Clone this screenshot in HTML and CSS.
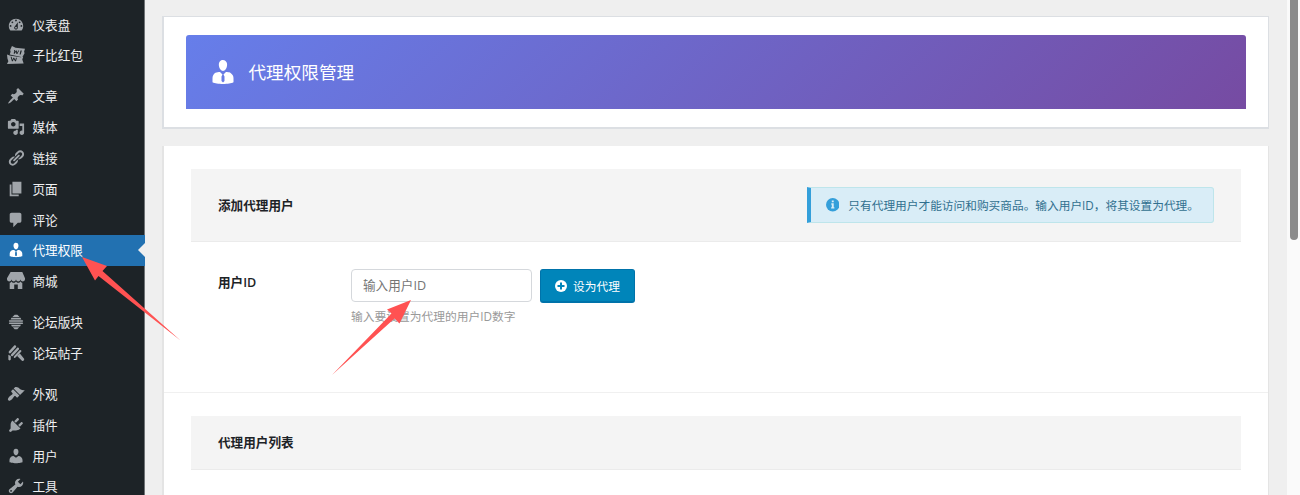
FILE: index.html
```html
<!DOCTYPE html>
<html lang="zh-CN">
<head>
    <meta charset="UTF-8">
    <title>代理权限管理</title>
    <meta name="viewport" content="width=device-width, initial-scale=1.0">
    <link rel="stylesheet" href="styles.css">
</head>
<body>

    <div class="admin">
        <ul class="menu">
            <li class="menu-item">
                <svg class="icon" viewBox="0 0 20 20"><path d="M3.76 16h12.48c1.1-1.37 1.76-3.11 1.76-5 0-4.42-3.58-8-8-8s-8 3.58-8 8c0 1.89.66 3.63 1.76 5zM10 4c.55 0 1 .45 1 1s-.45 1-1 1-1-.45-1-1 .45-1 1-1zM6 6c.55 0 1 .45 1 1s-.45 1-1 1-1-.45-1-1 .45-1 1-1zm8 0c.55 0 1 .45 1 1s-.45 1-1 1-1-.45-1-1 .45-1 1-1zm-5.37 5.55L12 7v6c0 1.1-.9 2-2 2s-2-.9-2-2c0-.57.24-1.08.63-1.45zM4 10c.55 0 1 .45 1 1s-.45 1-1 1-1-.45-1-1 .45-1 1-1zm12 0c.55 0 1 .45 1 1s-.45 1-1 1-1-.45-1-1 .45-1 1-1zm-5 3c0-.55-.45-1-1-1s-1 .45-1 1 .45 1 1 1 1-.45 1-1z"/></svg>
                <span>仪表盘</span>
            </li>
            <li class="menu-item">
                <svg class="icon" viewBox="0 0 20 20"><path fill-rule="evenodd" d="M5.5 0l4 2 10.5 1-1 3 .5 2-2.500 4.500L3 9.500l1-3-.5-2zM8 4.500l-.5 4h1l1.500-2 .5 2.500h1l2-4h-1l-1.200 2.500-.5-2.500h-1L8.500 7 9 4.500zM15 5l-1 4.500h1.200L16.500 5z"/><path fill-rule="evenodd" d="M0 9.500l3 1 12 2 3-.500-1 3 1.500 4.500L0 20l1.500-3-1-3zM4 12l1.500 5h1l1-2.500 1.500 2.500h1l1-4h-1l-.7 2.500L8 13H7l-.7 2.500L5 12z"/></svg>
                <span>子比红包</span>
            </li>
            <li class="separator"></li>
            <li class="menu-item">
                <svg class="icon" viewBox="0 0 20 20"><path d="M10.44 3.02l1.82-1.82 6.36 6.35-1.83 1.82c-1.05-.68-2.48-.57-3.41.36l-.75.75c-.92.93-1.04 2.35-.35 3.41l-1.83 1.82-2.41-2.41-2.8 2.79c-.42.42-3.38 2.71-3.8 2.29s1.86-3.39 2.28-3.81l2.79-2.79L4.1 9.36l1.83-1.82c1.05.69 2.48.57 3.4-.36l.75-.75c.93-.92 1.05-2.35.36-3.41z"/></svg>
                <span>文章</span>
            </li>
            <li class="menu-item">
                <svg class="icon" viewBox="0 0 20 20"><path d="M13 11V4c0-.55-.45-1-1-1h-1.67L9 1H5L3.67 3H2c-.55 0-1 .45-1 1v7c0 .55.45 1 1 1h10c.55 0 1-.45 1-1zM7 4.5c1.38 0 2.5 1.12 2.5 2.5S8.38 9.5 7 9.5 4.5 8.38 4.5 7 5.62 4.5 7 4.5zM14 6h5v10.5c0 1.38-1.12 2.5-2.5 2.5S14 17.88 14 16.5s1.12-2.5 2.5-2.5c.17 0 .34.02.5.05V9h-3V6zm-4 8.05V13h2v3.5c0 1.38-1.12 2.5-2.5 2.5S7 17.88 7 16.5 8.12 14 9.5 14c.17 0 .34.02.5.05z"/></svg>
                <span>媒体</span>
            </li>
            <li class="menu-item">
                <svg class="icon" viewBox="0 0 20 20"><path d="M17.74 2.76c1.68 1.69 1.68 4.41 0 6.1l-1.53 1.52c-1.12 1.12-2.7 1.47-4.14 1.09l2.62-2.61.76-.77.76-.76c.84-.84.84-2.2 0-3.04-.84-.85-2.2-.85-3.04 0l-.77.76-3.38 3.38c-.37-1.44-.02-3.02 1.1-4.14l1.52-1.53c1.69-1.68 4.42-1.68 6.1 0zM8.59 13.43l5.34-5.34c.42-.42.42-1.1 0-1.52-.44-.43-1.13-.39-1.53 0l-5.33 5.34c-.42.42-.42 1.1 0 1.52.44.43 1.13.39 1.52 0zm-.76 2.29l4.14-4.15c.38 1.44.03 3.02-1.09 4.14l-1.52 1.53c-1.69 1.68-4.41 1.68-6.1 0-1.68-1.68-1.68-4.42 0-6.1l1.53-1.52c1.12-1.12 2.7-1.47 4.14-1.1l-4.14 4.15c-.85.84-.85 2.2 0 3.05.84.84 2.2.84 3.04 0z"/></svg>
                <span>链接</span>
            </li>
            <li class="menu-item">
                <svg class="icon" viewBox="0 0 20 20"><path d="M6 15V2h10v13H6zm-1 1h8v2H3V5h2v11z"/></svg>
                <span>页面</span>
            </li>
            <li class="menu-item">
                <svg class="icon" viewBox="0 0 20 20"><path d="M5 2h9c1.1 0 2 .9 2 2v7c0 1.1-.9 2-2 2h-2l-5 5v-5H5c-1.1 0-2-.9-2-2V4c0-1.1.9-2 2-2z"/></svg>
                <span>评论</span>
            </li>
            <li class="menu-item current">
                <svg class="icon" viewBox="0 0 20 20"><path id="businessman" d="M7.3 6l-.03-.19c-.04-.37-.05-.73-.03-1.08.02-.36.1-.71.25-1.04.14-.32.31-.61.52-.86s.49-.46.83-.6c.34-.15.72-.23 1.13-.23.69 0 1.26.2 1.71.59s.76.87.91 1.44.18 1.16.09 1.78l-.03.19c-.01.09-.05.25-.11.48-.05.24-.12.47-.2.69-.08.21-.19.45-.34.72-.14.27-.3.49-.47.69-.18.19-.4.34-.67.48-.27.13-.55.19-.86.19s-.59-.06-.87-.19c-.26-.13-.49-.29-.67-.5-.18-.2-.34-.42-.49-.66-.15-.25-.26-.49-.34-.73-.09-.25-.16-.47-.21-.67-.06-.21-.1-.37-.12-.5zm9.2 6.24c.41.7.5 1.41.5 2.14v2.49c0 .03-.12.08-.29.13-.18.04-.42.13-.97.27-.55.12-1.1.24-1.65.34s-1.19.19-1.95.27c-.75.08-1.46.12-2.13.12-.68 0-1.39-.04-2.14-.12-.75-.07-1.4-.17-1.98-.27-.58-.11-1.08-.23-1.56-.34-.49-.11-.8-.21-1.06-.29L3 16.87v-2.49c0-.75.07-1.46.46-2.15s.81-1.25 1.5-1.68C5.66 10.12 7.19 10 8 10l1.67 1.67L9 13v3l1.02 1.08L11 16v-3l-.68-1.33L11.97 10c.77 0 2.2.07 2.9.52.71.45 1.21 1.02 1.63 1.72z"/></svg>
                <span>代理权限</span>
            </li>
            <li class="menu-item">
                <svg class="icon" viewBox="0 0 20 20"><path d="M1 10c.41.29.96.43 1.5.43.55 0 1.09-.14 1.5-.43.62-.46 1-1.17 1-2 0 .83.37 1.54 1 2 .41.29.96.43 1.5.43.55 0 1.09-.14 1.5-.43.62-.46 1-1.17 1-2 0 .83.37 1.54 1 2 .41.29.96.43 1.51.43.54 0 1.08-.14 1.49-.43.62-.46 1-1.17 1-2 0 .83.37 1.54 1 2 .41.29.96.43 1.5.43.55 0 1.09-.14 1.5-.43.63-.46 1-1.17 1-2V7l-3-7H4L0 7v1c0 .83.37 1.54 1 2zm2 8.99h5v-5h4v5h5v-7c-.37-.05-.72-.22-1-.43-.63-.45-1-.73-1-1.56 0 .83-.38 1.11-1 1.56-.41.3-.95.43-1.49.44-.55 0-1.1-.14-1.51-.44-.63-.45-1-.73-1-1.56 0 .83-.38 1.11-1 1.56-.41.3-.95.43-1.5.44-.54 0-1.09-.14-1.5-.44-.63-.45-1-.73-1-1.57 0 .84-.38 1.12-1 1.57-.29.21-.63.38-1 .44v6.99z"/></svg>
                <span>商城</span>
            </li>
            <li class="separator"></li>
            <li class="menu-item">
                <svg class="icon" viewBox="0 0 20 20"><path d="M8.5 2h3L14 4.500H6zM5 5.200h10l1 2H4zM2.700 8h14.600l.7.900-.7.900H2.700L2 8.900zM2.700 10.600h14.600l.7.800-.7.900H2.700l-.7-.9zM4.500 13.100h11l-1 1.800h-9zM6.500 15.700h7L11.500 18h-3z"/></svg>
                <span>论坛版块</span>
            </li>
            <li class="menu-item">
                <svg class="icon" viewBox="0 0 20 20"><path d="M8 1.800c1.200-1 3 .6 2 1.900L4.200 10c-1.200 1.200-3.200-.4-2-1.900zM11.300 4.200c1.200-1 2.900.6 1.900 1.800l-6.700 7.300c-1.200 1.200-3-.4-1.900-1.800zM14 7c1.200-1 2.600.5 1.700 1.600l-6.200 6.500c-1.100 1.100-2.700-.3-1.700-1.600zM14.300 10.500l4.700 6c.7 1.300-1.100 2.900-2.400 2.100l-5.300-5.300zM1.500 12l2.700 1.300V17c0 1.600-2.700 1.600-2.700 0z"/></svg>
                <span>论坛帖子</span>
            </li>
            <li class="separator"></li>
            <li class="menu-item">
                <svg class="icon" viewBox="0 0 20 20"><path d="M14.48 11.06L7.41 3.99l1.5-1.5c.5-.56 2.3-.47 3.51.32 1.21.8 1.43 1.28 2.91 2.1 1.18.64 2.45 1.26 4.45.85zm-.71.71L6.7 4.7 4.93 6.47c-.39.39-.39 1.02 0 1.41l1.06 1.06c.39.39.39 1.03 0 1.42-.6.6-1.43 1.11-2.21 1.69-.35.26-.7.53-1.01.84C1.43 14.23.4 16.08 1.4 17.07c.99 1 2.84-.03 4.18-1.36.31-.31.58-.66.85-1.02.57-.78 1.08-1.61 1.69-2.21.39-.39 1.02-.39 1.41 0l1.06 1.06c.39.39 1.02.39 1.41 0z"/></svg>
                <span>外观</span>
            </li>
            <li class="menu-item">
                <svg class="icon" viewBox="0 0 20 20"><path d="M13.11 4.36L9.87 7.6 8 5.73l3.24-3.24c.35-.34 1.05-.2 1.56.32.52.51.66 1.21.31 1.55zm-8 1.77l.91-1.12 9.01 9.01-1.19.84c-.71.71-2.63 1.16-3.82 1.16H6.14L4.9 17.26c-.59.59-1.54.59-2.12 0-.59-.58-.59-1.53 0-2.12l1.24-1.24v-3.88c0-1.13.4-3.19 1.09-3.89zm7.26 3.97l3.24-3.24c.34-.35 1.04-.21 1.55.31.52.51.66 1.21.31 1.55l-3.24 3.25z"/></svg>
                <span>插件</span>
            </li>
            <li class="menu-item">
                <svg class="icon" viewBox="0 0 20 20"><path d="M10 9.25c-2.27 0-2.73-3.44-2.73-3.44C7 4.02 7.82 2 9.97 2c2.16 0 2.98 2.02 2.71 3.81 0 0-.41 3.44-2.68 3.44zm0 2.57L12.72 10c2.39 0 4.52 2.33 4.52 4.53v2.49s-3.65 1.13-7.24 1.13c-3.65 0-7.24-1.13-7.24-1.13v-2.49c0-2.25 1.94-4.48 4.47-4.48z"/></svg>
                <span>用户</span>
            </li>
            <li class="menu-item">
                <svg class="icon" viewBox="0 0 20 20"><path d="M16.68 9.77c-1.34 1.34-3.3 1.67-4.95.99l-5.41 6.52c-.99.99-2.59.99-3.58 0s-.99-2.59 0-3.57l6.52-5.42c-.68-1.65-.35-3.61.99-4.95 1.28-1.28 3.12-1.62 4.72-1.06l-2.89 2.89 2.82 2.82 2.86-2.87c.53 1.58.18 3.39-1.08 4.65zM3.81 16.21c.4.39 1.04.39 1.43 0 .4-.4.4-1.04 0-1.43-.39-.4-1.03-.4-1.43 0-.39.39-.39 1.03 0 1.43z"/></svg>
                <span>工具</span>
            </li>
        </ul>

        <div class="content">
            <div class="card header-card">
                <div class="banner">
                    <svg class="banner-icon" viewBox="0 0 20 20"><use href="#businessman"/></svg>
                    <h1>代理权限管理</h1>
                </div>
            </div>

            <div class="card main-card">
                <div class="section">
                    <div class="section-title tall">
                        <h2>添加代理用户</h2>
                        <div class="notice">
                            <svg class="notice-icon" viewBox="0 0 14 14"><circle cx="7" cy="7" r="7"/><path class="mark" d="M6 2.500h2v2H6zM5.500 5.500H8v4h.7V11H5.300V9.500H6V7h-.5z"/></svg>
                            <span>只有代理用户才能访问和购买商品。输入用户ID，将其设置为代理。</span>
                        </div>
                    </div>
                    <div class="form-group">
                        <label for="user-id">用户ID</label>
                        <div class="field">
                            <div class="field-row">
                                <input type="text" id="user-id" placeholder="输入用户ID">
                                <button class="button">
                                    <svg class="button-icon" viewBox="0 0 12 12"><circle cx="6" cy="6" r="6"/><path class="mark" d="M5 2.500h2V5h2.500v2H7v2.500H5V7H2.500V5H5z"/></svg>
                                    <span>设为代理</span>
                                </button>
                            </div>
                            <p class="help">输入要设置为代理的用户ID数字</p>
                        </div>
                    </div>
                </div>
                <div class="section">
                    <div class="section-title">
                        <h2>代理用户列表</h2>
                    </div>
                </div>
            </div>
        </div>

        <div class="scrollbar"><div class="thumb"></div></div>
    </div>

    <svg class="arrows" viewBox="0 0 1300 495">
        <path d="M82 257l25 9-4.500 5L180.500 340.500 98.500 276l-3.500 4.500z"/>
        <path d="M411 300l-11.500 23.500-5-5L332 375 391.500 313.500l-4.500-4z"/>
    </svg>

</body>
</html>
```
FILE: styles.css
```css
* {
    margin: 0;
    padding: 0;
    box-sizing: border-box;
}

body {
    font-family: 'Open Sans', 'Noto Sans CJK SC', sans-serif;
    font-size: 12.6px;
    color: #1d2327;
    background-color: #efefef;
    overflow: hidden;
}

.admin {
    display: flex;
    height: 495px;
    overflow: hidden;
}

/* Menu */
.menu {
    width: 145px;
    flex-shrink: 0;
    padding-top: 9.3px;
    background-color: #1d2327;
    border-right: 1px solid #6f7376;
    list-style: none;
}

.menu-item {
    display: flex;
    align-items: center;
    gap: 7.5px;
    height: 30.8px;
    padding-left: 7px;
    color: #f0f0f1;
    font-size: 12.6px;
    line-height: 18px;
}

.menu-item span {
    padding-top: 2px;
}

.icon {
    width: 18px;
    height: 18px;
    flex-shrink: 0;
    fill: #a0a5aa;
}

.separator {
    height: 10.2px;
}

.current {
    position: relative;
    margin-right: -1px;
    background-color: #2271b1;
    color: #fff;
}

.current .icon {
    fill: #fff;
}

.current::after {
    content: "";
    position: absolute;
    right: 0;
    top: 8px;
    border: 7px solid transparent;
    border-left: 0;
    border-right-color: #efefef;
}

/* Content */
.content {
    flex: 1;
    padding: 16px 18px 0 17px;
}

.card {
    background-color: #fff;
    border: 1px solid #dcdfe3;
}

.header-card {
    height: 112.5px;
    padding: 18px 22px;
    border-width: 1px 1px 2px 2px;
}

.banner {
    display: flex;
    align-items: center;
    height: 74px;
    padding-left: 22px;
    border-radius: 3px 3px 0 0;
    background: linear-gradient(135deg, #667eea 0%, #764ba2 100%);
    color: #fff;
}

.banner-icon {
    width: 30px;
    height: 30px;
    margin-right: 10.5px;
    fill: #fff;
}

h1 {
    padding-bottom: 2px;
    font-size: 17.6px;
    font-weight: 400;
}

.main-card {
    height: 400px;
    margin-top: 17.5px;
    border-width: 0 1px 0 2px;
    border-color: #e4e4e4;
}

.section {
    height: 247px;
    padding: 23px 27px 0;
    border-bottom: 1px solid #f0f0f0;
}

.section-title {
    display: flex;
    align-items: center;
    justify-content: space-between;
    height: 54px;
    padding: 0 27px;
    background-color: #f4f4f4;
    border-bottom: 1px solid #ebebeb;
}

.tall {
    height: 73px;
}

h2,
label {
    font-size: 12.6px;
    font-weight: 600;
}

h2 {
    padding-bottom: 2px;
}

.notice {
    display: flex;
    align-items: center;
    gap: 9px;
    height: 36px;
    padding: 0 14px 0 15px;
    border: 1px solid #bee5eb;
    border-left: 4px solid #349fda;
    border-radius: 0 3px 3px 0;
    background-color: #d9edf7;
    color: #31708f;
    font-size: 11.7px;
    white-space: nowrap;
}

.notice span {
    padding-bottom: 1px;
}

.notice-icon {
    width: 13.5px;
    height: 13.5px;
    fill: #349fda;
}

.notice-icon .mark {
    fill: #d9edf7;
}

.form-group {
    display: flex;
    padding: 27px 27px 0;
}

label {
    width: 133px;
    padding-top: 5px;
    line-height: 18px;
}

.field-row {
    display: flex;
    gap: 8px;
}

input {
    width: 181px;
    height: 33px;
    padding: 0 11px;
    border: 1px solid #d5d8dc;
    border-radius: 4px;
    font-family: inherit;
    font-size: 12.6px;
}

input::placeholder {
    color: #757575;
}

.button {
    display: flex;
    align-items: center;
    justify-content: center;
    gap: 6px;
    width: 95px;
    height: 34px;
    border: 1px solid #0073aa;
    border-bottom-width: 2px;
    border-radius: 3px;
    background-color: #0085ba;
    color: #fff;
    font-family: inherit;
    font-size: 11.7px;
}

.button-icon {
    width: 12px;
    height: 12px;
    fill: #fff;
}

.button-icon .mark {
    fill: #0085ba;
}

.help {
    margin-top: 4px;
    color: #999;
    font-size: 11.75px;
    line-height: 18px;
}

/* Scrollbar */
.scrollbar {
    width: 13px;
    flex-shrink: 0;
    background-color: #fafafa;
}

.thumb {
    width: 8px;
    height: 240px;
    margin-left: 3px;
    border-radius: 0 0 4px 4px;
    background-color: #8b8b8b;
}

/* Pointers drawn over the page */
.arrows {
    position: absolute;
    left: 0;
    top: 0;
    width: 1300px;
    height: 495px;
    fill: #ff5252;
    pointer-events: none;
}
```
